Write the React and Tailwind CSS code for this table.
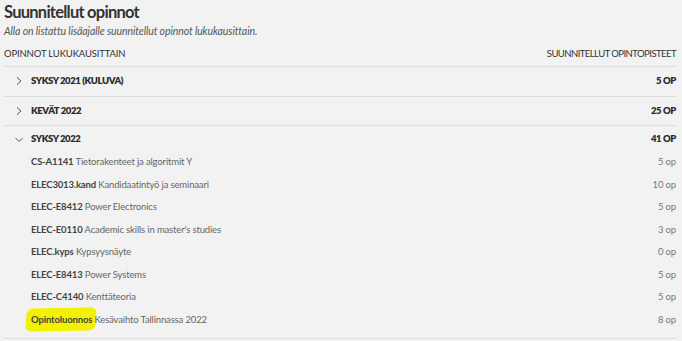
import React from "react";

const courses = [
  { code: "CS-A1141", name: "Tietorakenteet ja algoritmit Y", op: "5 op" },
  { code: "ELEC3013.kand", name: "Kandidaatintyö ja seminaari", op: "10 op" },
  { code: "ELEC-E8412", name: "Power Electronics", op: "5 op" },
  { code: "ELEC-E0110", name: "Academic skills in master's studies", op: "3 op" },
  { code: "ELEC.kyps", name: "Kypsyysnäyte", op: "0 op" },
  { code: "ELEC-E8413", name: "Power Systems", op: "5 op" },
  { code: "ELEC-C4140", name: "Kenttäteoria", op: "5 op" },
  { code: "Opintoluonnos", name: "Kesävaihto Tallinnassa 2022", op: "8 op", highlight: true },
];

const ChevronRight = () => (
  <svg width="8" height="10" viewBox="0 0 8 10" className="text-[#555]">
    <polyline points="2,1.5 6,5 2,8.5" fill="none" stroke="currentColor" strokeWidth="1" />
  </svg>
);

const ChevronDown = () => (
  <svg width="10" height="8" viewBox="0 0 10 8" className="text-[#555]">
    <polyline points="1.5,2 5,5.5 8.5,2" fill="none" stroke="currentColor" strokeWidth="1" />
  </svg>
);

const SemesterRow = ({ title, op, open }) => (
  <div className={`flex items-center justify-between ${open ? "h-[25px] pt-[2px]" : "h-[29.5px] border-b border-[#dedede]"}`}>
    <div className="flex items-center">
      <div className="w-[27px] flex justify-center pl-[2px]">
        {open ? <ChevronDown /> : <ChevronRight />}
      </div>
      <span className="text-[9.5px] font-extrabold tracking-[-0.4px] text-[#2b2b2b]">{title}</span>
    </div>
    <span className="text-[9.5px] font-extrabold tracking-[-0.4px] text-[#2b2b2b]">{op}</span>
  </div>
);

export default function App() {
  return (
    <div className="w-[682px] h-[341px] overflow-hidden bg-[#f2f2f2] pl-[4px] pr-[6px]" style={{ fontFamily: 'Lato, sans-serif' }}>
      <h1 className="text-[16.5px] leading-[24px] font-bold tracking-[-0.75px] text-[#333]">Suunnitellut opinnot</h1>
      <p className="text-[10.5px] leading-[14px] italic tracking-[-0.1px] text-[#555]">
        Alla on listattu lisäajalle suunnitellut opinnot lukukausittain.
      </p>
      <div className="flex justify-between pt-[10px] pb-[6px] leading-[12px] text-[9.5px] text-[#333] border-b border-[#dedede]">
        <span className="tracking-[-0.15px]">OPINNOT LUKUKAUSITTAIN</span>
        <span className="tracking-[-0.55px]">SUUNNITELLUT OPINTOPISTEET</span>
      </div>
      <SemesterRow title="SYKSY 2021 (KULUVA)" op="5 OP" />
      <SemesterRow title="KEVÄT 2022" op="25 OP" />
      <div className="border-b border-[#dedede] pb-[7px]">
        <SemesterRow title="SYKSY 2022" op="41 OP" open />
        {courses.map((c) => (
          <div key={c.code} className="h-[22.5px] flex items-center justify-between text-[9.5px] tracking-[-0.15px]">
            <div className="pl-[27px] text-[#666]">
              <span className={`font-bold text-[#444] ${c.highlight ? "relative" : ""}`}>
                {c.highlight && (
                  <span className="absolute left-[-5px] right-[-4px] top-[-6px] bottom-[-6px] bg-[#f2f200] rounded-[6px] -skew-x-6 rotate-[-1deg]" />
                )}
                <span className="relative">{c.code}</span>
              </span>{" "}
              <span className="relative">{c.name}</span>
            </div>
            <span className="text-[#777]">{c.op}</span>
          </div>
        ))}
      </div>
    </div>
  );
}
